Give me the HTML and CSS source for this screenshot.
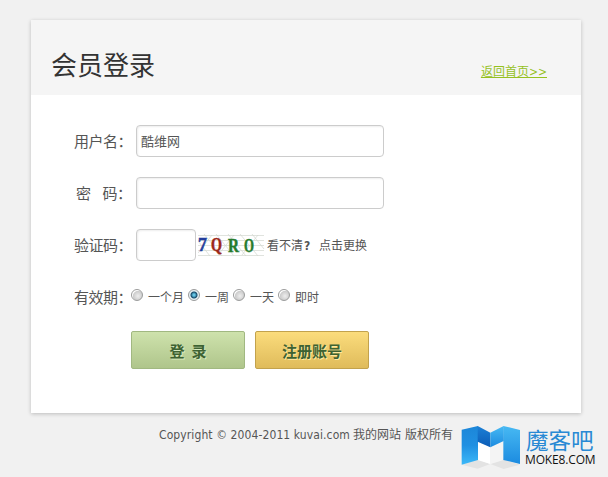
FILE: index.html
```html
<!DOCTYPE html>
<html lang="zh-CN">
<head>
<meta charset="utf-8">
<title>会员登录</title>
<link rel="stylesheet" href="styles.css">
</head>
<body>
<main class="card">
  <header class="head">
    <h1>会员登录</h1>
    <a class="home" href="#">返回首页&gt;&gt;</a>
  </header>
  <form class="form">
    <div class="row">
      <label class="label" for="user">用户名：</label>
      <input class="field" id="user" type="text" value="酷维网">
    </div>
    <div class="row">
      <label class="label pass" for="pass"><span>密</span><span>码：</span></label>
      <input class="field" id="pass" type="password">
    </div>
    <div class="row">
      <label class="label" for="code">验证码：</label>
      <input class="field short" id="code" type="text">
      <svg class="captcha" width="68" height="24" viewBox="0 0 68 24">
        <path class="grid" d="M0 2.5H66M0 7.5H66M0 12.5H66M0 17.5H66M0 22.5H66M0 8L12 23M6 1L24 23M18 1L36 23M30 1L48 23M42 1L60 23M54 1L66 16M0 20L14 2M20 22L36 2M44 22L60 2"/>
        <text x="0" y="18" class="c1">7</text>
        <text x="13" y="18" class="c2" textLength="11" lengthAdjust="spacingAndGlyphs">Q</text>
        <text x="30" y="19" class="c3" textLength="11" lengthAdjust="spacingAndGlyphs">R</text>
        <text x="46" y="19" class="c3" textLength="10" lengthAdjust="spacingAndGlyphs">O</text>
      </svg>
      <span class="refresh">看不清<b>?</b></span><span class="change">点击更换</span>
    </div>
    <div class="row periods">
      <span class="label">有效期：</span>
      <label class="opt"><input type="radio" name="t"><span>一个月</span></label>
      <label class="opt"><input type="radio" name="t" checked><span>一周</span></label>
      <label class="opt"><input type="radio" name="t"><span>一天</span></label>
      <label class="opt"><input type="radio" name="t"><span>即时</span></label>
    </div>
    <div class="actions">
      <button class="btn green" type="button">登&nbsp; 录</button>
      <button class="btn gold" type="button">注册账号</button>
    </div>
  </form>
</main>
<footer class="foot"><span class="latin">Copyright © 2004-2011 kuvai.com</span><span>我的网站</span><span>版权所有</span></footer>
<div class="brand">
  <svg width="60" height="45" viewBox="0 0 180 135">
    <defs>
      <linearGradient id="a" x1="0" y1="0" x2="0" y2="1"><stop offset="0" stop-color="#1c86d8"/><stop offset=".5" stop-color="#2090e2"/><stop offset="1" stop-color="#3cb8f8"/></linearGradient>
      <linearGradient id="b" x1="0" y1="0" x2="0" y2="1"><stop offset="0" stop-color="#47b9f3"/><stop offset="1" stop-color="#1c8be0"/></linearGradient>
      <linearGradient id="c" x1="0" y1="0" x2="0" y2="1"><stop offset="0" stop-color="#1b80d6"/><stop offset="1" stop-color="#0c5cb6"/></linearGradient>
    </defs>
    <path fill="#e3e3e3" d="M2 119L50 103L88 117L50 131ZM88 117L128 103L177 119L128 132Z"/>
    <path fill="#fff" d="M50 48L88 66V117L50 105Z"/>
    <path fill="#f4f4f4" d="M88 66L128 47V105L88 117Z"/>
    <path fill="url(#a)" d="M2 14L51 3V105L2 119Z"/>
    <path fill="url(#b)" d="M127 3L177 15V117L127 105Z"/>
    <path fill="url(#c)" d="M50 3L88 23V67L50 50Z"/>
    <path fill="url(#b)" d="M88 23L128 3V48L88 67Z"/>
  </svg>
  <div class="names"><span class="cn">魔客吧</span><span class="en">MOKE8.COM</span></div>
</div>
</body>
</html>
```
FILE: styles.css
```css
* { box-sizing: border-box; }
body {
  margin: 0;
  height: 477px;
  overflow: hidden;
  padding: 20px 27px 0 31px;
  background: #f1f1f1;
  color: #555;
  font: 12px/18px "DejaVu Sans Condensed", "Noto Sans CJK SC", sans-serif;
}
.card {
  height: 393px;
  background: #fff;
  box-shadow: 0 1px 4px rgba(0, 0, 0, .22);
}
.head {
  display: flex;
  justify-content: space-between;
  height: 75px;
  padding: 25px 34px 0 20px;
  background: #f5f5f5;
}
h1 {
  margin: 0;
  color: #333;
  font: 400 26px/38px "Noto Sans CJK SC", sans-serif;
}
.home {
  margin-top: 18px;
  height: 18px;
  color: #96c11f;
}
.form { padding: 30px 0 0 43px; }
.row {
  display: flex;
  align-items: center;
  height: 32px;
  margin-bottom: 20px;
}
.label {
  width: 62px;
  padding-top: 1px;
  font-size: 15px;
  line-height: 22px;
  white-space: nowrap;
  letter-spacing: -.5px;
}
.pass { display: flex; gap: 12px; padding-left: 2px; }
.field {
  width: 248px;
  height: 32px;
  padding: 0 4px 2px;
  border: 1px solid #ccc;
  border-radius: 4px;
  outline: 0;
  background: #fff;
  box-shadow: inset 1px 1px 2px #eee;
  color: #555;
  font: 13px "Noto Sans CJK SC", sans-serif;
}
.short { width: 60px; }
.captcha { margin-left: 2px; }
.captcha text { font: bold 18px "Liberation Serif", serif; stroke-width: .5; }
.grid { stroke: #d3d7d0; stroke-width: .7; fill: none; }
.c1 { fill: #243e9c; stroke: #243e9c; }
.c2 { fill: #9c2818; stroke: #9c2818; }
.c3 { fill: #267b2d; stroke: #267b2d; }
.refresh { width: 52px; margin-left: 1px; }
.refresh, .change { padding-top: 1px; }
.refresh b { margin-left: 1px; }
.periods { margin-bottom: 18px; }
.periods .label { width: 57px; }
.opt { display: flex; margin-right: 4px; }
.opt span { padding-top: 1px; }
.opt input {
  appearance: none;
  width: 12px;
  height: 12px;
  margin: 1px 5px 0 0;
  border: 1px solid #9a9b9b;
  border-radius: 50%;
  background: radial-gradient(circle at 60% 60%, #eee, #ccc 55%, #fff 65%);
}
.opt input:checked { background: radial-gradient(circle, #64c5e5 0 1px, #164b6b 3px, #e5eff3 4px); }
.actions { display: flex; gap: 10px; padding-left: 57px; }
.btn {
  width: 114px;
  height: 38px;
  padding: 2px 0 0;
  border: 1px solid;
  border-radius: 2px;
  color: #3d6232;
  font: bold 15px/20px "Noto Sans CJK SC", sans-serif;
}
.green {
  border-color: #a1b881;
  background: linear-gradient(#cee2ac, #afc58b);
  text-shadow: 1px 1px #d7e9be;
}
.gold {
  border-color: #c2a24d;
  background: linear-gradient(#fbdc7c, #dfbb5b);
  text-shadow: 1px 1px #ffe79e;
}
.foot {
  display: flex;
  gap: 4px;
  padding: 13px 0 0 128px;
  white-space: nowrap;
}
.latin { width: 190px; letter-spacing: .1px; }
.brand {
  position: absolute;
  left: 461px;
  top: 425px;
  display: flex;
  gap: 4px;
}
.names { display: flex; flex-direction: column; white-space: nowrap; }
.cn {
  height: 27px;
  padding-left: 1px;
  color: #2989d4;
  font: 400 22.5px/28px "Noto Sans CJK SC", sans-serif;
}
.en {
  color: #111;
  font: 500 12px/15px "Open Sans", sans-serif;
  letter-spacing: -.15px;
}
```
